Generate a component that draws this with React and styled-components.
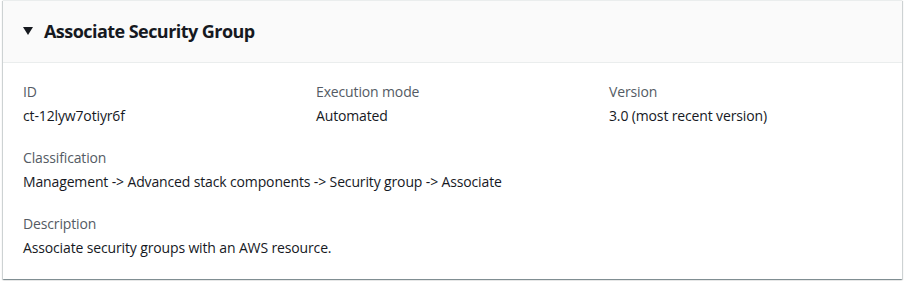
import React from "react";
import styled, { createGlobalStyle } from "styled-components";

const Global = createGlobalStyle`
  html, body { margin: 0; padding: 0; background: #ffffff; }
  body { font-family: "Open Sans", "Noto Sans", Arial, sans-serif; -webkit-font-smoothing: antialiased; }
`;

const Page = styled.div`
  padding: 0 3px 3px 3px;
`;

const Card = styled.section`
  background: #ffffff;
  border-top: 1px solid #eaeded;
  box-shadow: 0 1px 1px 0 rgba(0, 28, 36, 0.3), 1px 1px 1px 0 rgba(0, 28, 36, 0.15),
    -1px 1px 1px 0 rgba(0, 28, 36, 0.15);
`;

const Header = styled.header`
  display: flex;
  align-items: center;
  gap: 11px;
  height: 62px;
  padding: 0 20px 2px 20px;
  box-sizing: border-box;
  background: #fafafa;
  border-bottom: 1px solid #eaeded;
`;

const Caret = styled.svg`
  width: 10px;
  height: 8px;
  flex: none;
`;

const Title = styled.h2`
  margin: 0;
  font-size: 18px;
  font-weight: 700;
  line-height: 22px;
  color: #16191f;
  letter-spacing: -0.55px;
`;

const Body = styled.div`
  display: flex;
  flex-direction: column;
  gap: 20px;
  padding: 18px 0 20px 20px;
`;

const Grid = styled.div`
  display: grid;
  grid-template-columns: repeat(${(p) => p.$cols}, 1fr);
`;

const Field = styled.div`
  display: flex;
  flex-direction: column;
  gap: 2px;
`;

const Label = styled.div`
  font-size: 14px;
  line-height: 22px;
  color: #545b64;
  letter-spacing: -0.14px;
`;

const Value = styled.div`
  font-size: 14px;
  line-height: 22px;
  color: #16191f;
  letter-spacing: -0.14px;
`;

export default function App() {
  return (
    <>
      <Global />
      <Page>
        <Card>
          <Header>
            <Caret viewBox="0 0 10 8">
              <path d="M0 0 H10 L5 8 Z" fill="#16191f" />
            </Caret>
            <Title>Associate Security Group</Title>
          </Header>
          <Body>
            <Grid $cols={3}>
              <Field>
                <Label>ID</Label>
                <Value>ct-12lyw7otiyr6f</Value>
              </Field>
              <Field>
                <Label>Execution mode</Label>
                <Value>Automated</Value>
              </Field>
              <Field>
                <Label>Version</Label>
                <Value>3.0 (most recent version)</Value>
              </Field>
            </Grid>
            <Field>
              <Label>Classification</Label>
              <Value>Management -&gt; Advanced stack components -&gt; Security group -&gt; Associate</Value>
            </Field>
            <Field>
              <Label>Description</Label>
              <Value>Associate security groups with an AWS resource.</Value>
            </Field>
          </Body>
        </Card>
      </Page>
    </>
  );
}
